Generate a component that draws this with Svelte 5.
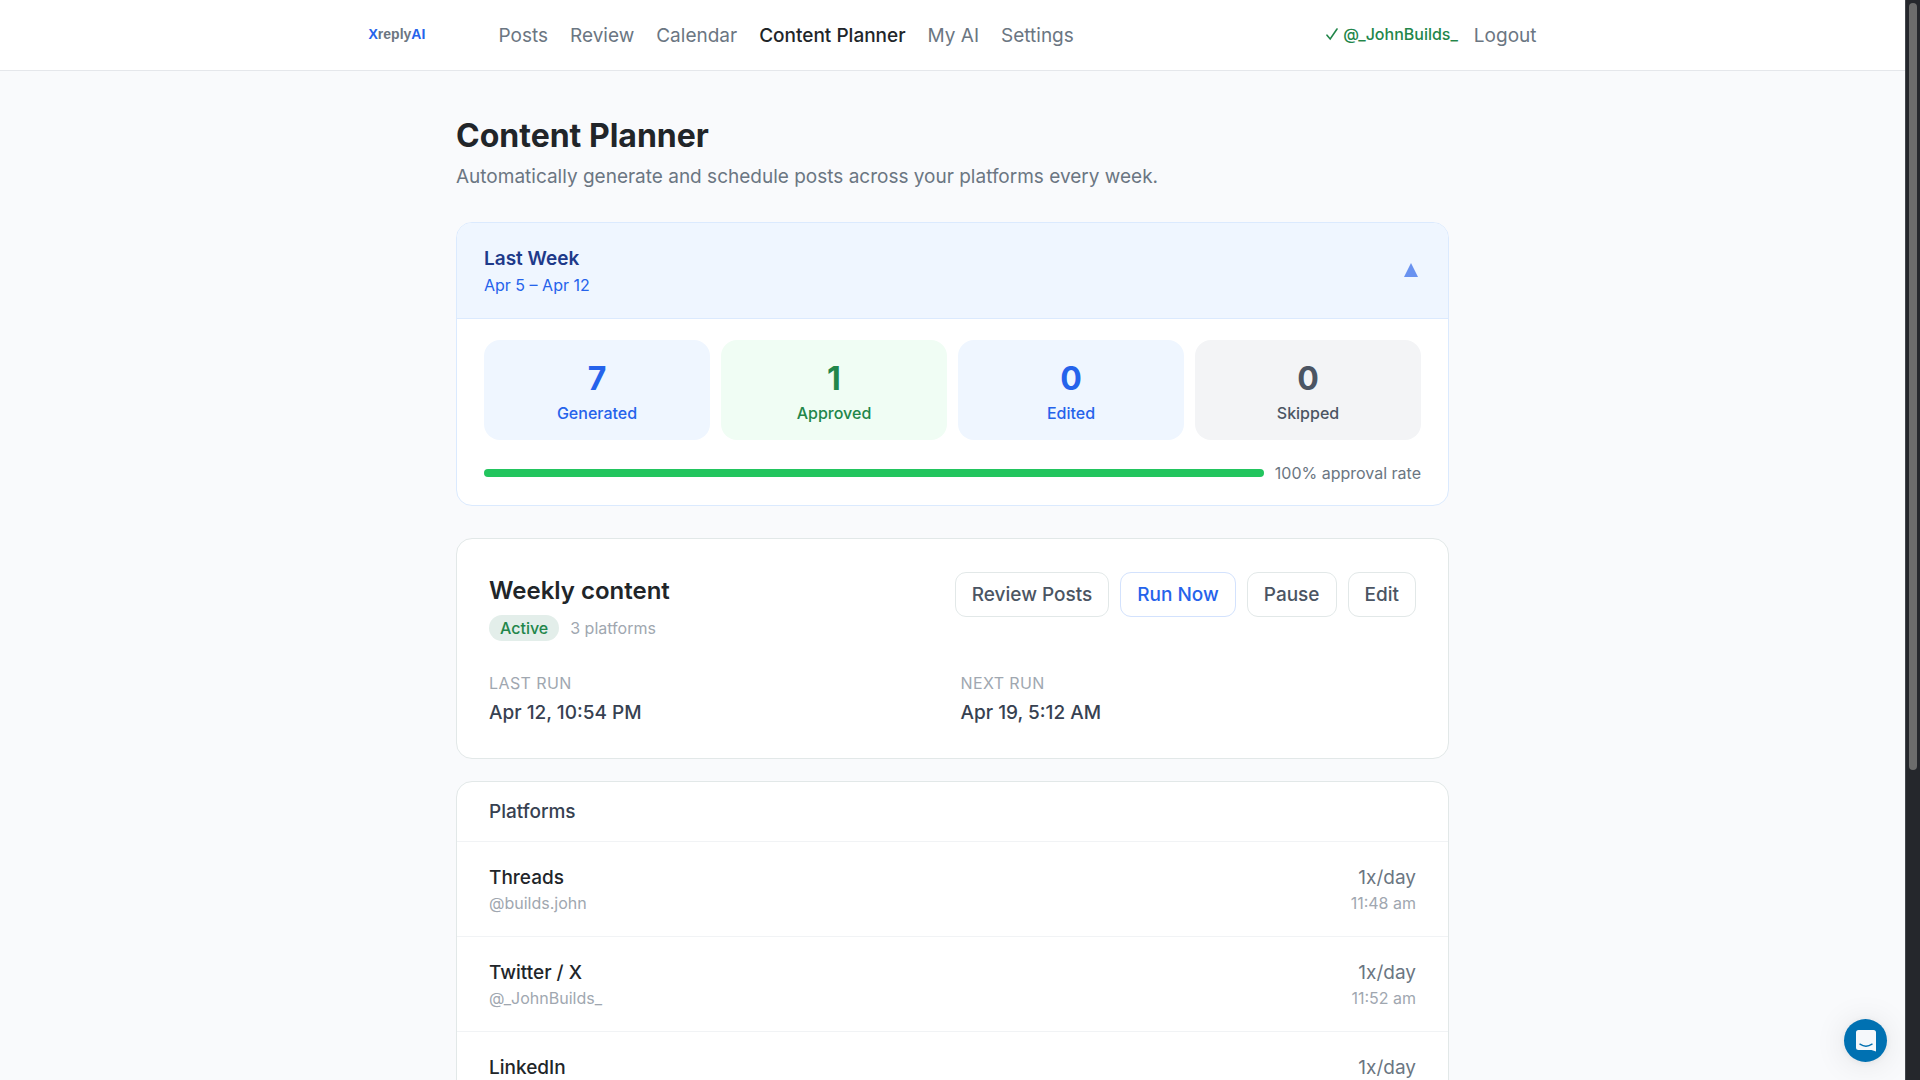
<script>
  const links = ["Posts", "Review", "Calendar", "Content Planner", "My AI", "Settings"];
  const current = "Content Planner";

  const stats = [
    { label: "Generated", value: 7, tone: "blue" },
    { label: "Approved", value: 1, tone: "green" },
    { label: "Edited", value: 0, tone: "blue" },
    { label: "Skipped", value: 0, tone: "gray" },
  ];

  const platforms = [
    { name: "Threads", handle: "@builds.john", rate: "1x/day", time: "11:48 am" },
    { name: "Twitter / X", handle: "@_JohnBuilds_", rate: "1x/day", time: "11:52 am" },
    { name: "LinkedIn", rate: "1x/day" },
  ];

  let approval = $state(100);
  let open = $state(true);
</script>

<div class="app">
  <div class="page">
    <header>
      <div class="bar">
        <a class="logo" href="#home"><b>X</b>reply<b>AI</b></a>
        <nav>
          {#each links as link}
            <a href="#{link}" class:active={link === current}>{link}</a>
          {/each}
        </nav>
        <div class="account">
          <span class="user">
            <svg viewBox="0 0 12 14" width="12" height="14" aria-hidden="true">
              <path d="M1 8.2 4.2 12 11 2" fill="none" stroke="currentColor" stroke-width="1.6" stroke-linecap="round" />
            </svg>
            @_JohnBuilds_
          </span>
          <button type="button" class="logout">Logout</button>
        </div>
      </div>
    </header>

    <main>
      <h1>Content Planner</h1>
      <p class="lead">Automatically generate and schedule posts across your platforms every week.</p>

      <section class="card recap">
        <button type="button" class="recap-head" aria-expanded={open} onclick={() => (open = !open)}>
          <span class="recap-title">
            <strong>Last Week</strong>
            <span class="small">Apr 5 – Apr 12</span>
          </span>
          <svg class="caret" class:closed={!open} viewBox="0 0 14 16" width="14" height="16" aria-hidden="true">
            <path d="M7 0 14 14H0Z" fill="currentColor" />
          </svg>
        </button>

        {#if open}
          <div class="recap-body">
            <div class="stats">
              {#each stats as stat}
                <div class="stat {stat.tone}">
                  <div class="value">{stat.value}</div>
                  <div class="label">{stat.label}</div>
                </div>
              {/each}
            </div>
            <div class="approval">
              <div class="track"><div class="fill" style="width: {approval}%"></div></div>
              <span class="small">{approval}% approval rate</span>
            </div>
          </div>
        {/if}
      </section>

      <section class="card plan">
        <div class="plan-head">
          <div>
            <h2>Weekly content</h2>
            <div class="meta">
              <span class="badge">Active</span>
              <span class="small muted">3 platforms</span>
            </div>
          </div>
          <div class="actions">
            <button type="button">Review Posts</button>
            <button type="button" class="primary">Run Now</button>
            <button type="button">Pause</button>
            <button type="button">Edit</button>
          </div>
        </div>
        <dl>
          <div>
            <dt>Last run</dt>
            <dd>Apr 12, 10:54 PM</dd>
          </div>
          <div>
            <dt>Next run</dt>
            <dd>Apr 19, 5:12 AM</dd>
          </div>
        </dl>
      </section>

      <section class="card platforms">
        <h3>Platforms</h3>
        <ul>
          {#each platforms as p}
            <li>
              <div class="account-info">
                <div class="name">{p.name}</div>
                {#if p.handle}
                  <div class="small muted">{p.handle}</div>
                {/if}
              </div>
              <div class="schedule">
                <div>{p.rate}</div>
                {#if p.time}
                  <div class="small muted">{p.time}</div>
                {/if}
              </div>
            </li>
          {/each}
        </ul>
      </section>
    </main>

    <button type="button" class="chat" aria-label="Open chat">
      <svg viewBox="0 0 20 22" width="20" height="22" aria-hidden="true">
        <path d="M2.500 0H17.500Q20 0 20 2.500V21.500L15.500 20H2.500Q0 20 0 17.500V2.500Q0 0 2.500 0Z" fill="#f5f8fb" />
        <path d="M4 14.200Q10 18.200 16 14.200" fill="none" stroke="#0071b2" stroke-width="1.500" stroke-linecap="round" />
      </svg>
    </button>
  </div>

  <div class="scrollbar"><div class="thumb"></div></div>
</div>

<style>
  :global(body) {
    background: #f9fafc;
  }

  .app {
    display: flex;
    height: 100vh;
    overflow: hidden;
    font-family: Inter, "Liberation Sans", sans-serif;
    font-size: 19px;
    line-height: 27px;
    color: #212529;
  }

  .page {
    position: relative;
    flex: 1;
    min-width: 0;
    overflow: hidden;
  }

  button {
    font: inherit;
    color: inherit;
    cursor: pointer;
  }

  a {
    color: inherit;
    text-decoration: none;
  }

  header {
    background: #fff;
    border-bottom: 1px solid #e5e7eb;
  }

  .bar {
    display: flex;
    align-items: center;
    max-width: 1168px;
    height: 70px;
    margin: 0 auto;
    color: #6b7682;
  }

  .logo {
    font-family: "Liberation Sans", sans-serif;
    font-size: 14px;
    font-weight: 700;
    line-height: 22px;
    width: 130px;
    padding-bottom: 2px;
  }

  .logo b {
    color: #2563eb;
  }

  nav {
    display: flex;
    flex: 1;
    gap: 22px;
  }

  .active {
    color: #212529;
    font-weight: 500;
  }

  .account {
    display: flex;
    align-items: center;
    gap: 16px;
  }

  .user {
    display: flex;
    align-items: center;
    gap: 5px;
    padding-bottom: 2px;
    font-size: 16px;
    font-weight: 500;
    line-height: 22px;
    color: #22864a;
  }

  .logout {
    padding: 0;
    border: none;
    background: none;
  }

  main {
    max-width: 993px;
    margin: 0 auto;
    padding: 44px 0;
  }

  h1,
  h2,
  h3,
  p,
  ul,
  dl,
  dd {
    margin: 0;
  }

  h1 {
    font-size: 32px;
    line-height: 42px;
    font-weight: 700;
  }

  .lead {
    margin: 6px 0 32px;
    color: #6b7682;
  }

  .small {
    font-size: 16px;
    line-height: 22px;
  }

  .muted {
    color: #a0a7b0;
  }

  .card {
    background: #fff;
    border: 1px solid #e2e8e8;
    border-radius: 16px;
    overflow: hidden;
  }

  .recap {
    border-color: #dbeafe;
    margin-bottom: 32px;
  }

  .recap-head {
    display: flex;
    justify-content: space-between;
    align-items: center;
    width: 100%;
    padding: 22px 27px;
    border: none;
    background: #eff6ff;
    color: #2563eb;
    text-align: left;
  }

  .recap-title {
    display: grid;
    gap: 2px;
  }

  .recap-title strong {
    font-weight: 600;
    color: #1e3a8a;
  }

  .caret {
    margin-right: 3px;
    color: #6992f0;
  }

  .closed {
    transform: rotate(180deg);
  }

  .recap-body {
    padding: 21px 27px;
    border-top: 1px solid #dbeafe;
  }

  .stats {
    display: grid;
    grid-template-columns: repeat(4, 1fr);
    gap: 11px;
    margin-bottom: 22px;
  }

  .stat {
    padding: 16px;
    border-radius: 16px;
    text-align: center;
  }

  .value {
    font-size: 32px;
    line-height: 46px;
    font-weight: 700;
  }

  .label {
    font-size: 16px;
    line-height: 22px;
    font-weight: 500;
  }

  .blue {
    background: #eff6ff;
    color: #2563eb;
  }

  .green {
    background: #f0fdf4;
    color: #22864a;
  }

  .gray {
    background: #f3f4f6;
    color: #4b5563;
  }

  .approval {
    display: flex;
    align-items: center;
    gap: 11px;
    color: #6b7682;
  }

  .track {
    flex: 1;
    height: 8px;
    border-radius: 4px;
    background: #f3f4f6;
  }

  .fill {
    height: 100%;
    border-radius: 4px;
    background: #22c55e;
  }

  .plan {
    padding: 33px 32px 32px;
    margin-bottom: 22px;
  }

  .plan-head {
    display: flex;
    justify-content: space-between;
    align-items: flex-start;
    margin-bottom: 31px;
  }

  h2 {
    font-size: 24px;
    line-height: 38px;
    font-weight: 600;
  }

  .meta {
    display: flex;
    align-items: center;
    gap: 11px;
    margin-top: 5px;
  }

  .badge {
    padding: 2px 11px;
    border-radius: 16px;
    background: #e3eeea;
    color: #22864a;
    font-size: 16px;
    line-height: 22px;
    font-weight: 500;
  }

  .actions {
    display: flex;
    gap: 11px;
  }

  .actions button {
    padding: 8px 16px;
    border: 1px solid #e2e8e8;
    border-radius: 11px;
    background: #fff;
    color: #4b5563;
    font-weight: 500;
  }

  .actions .primary {
    border-color: #d3e2fd;
    color: #2563eb;
  }

  dl {
    display: grid;
    grid-template-columns: 1fr 1fr;
    gap: 16px;
  }

  dt {
    margin-bottom: 5px;
    font-size: 16px;
    line-height: 22px;
    letter-spacing: 0.025em;
    text-transform: uppercase;
    color: #a0a7b0;
  }

  dd {
    font-weight: 500;
    color: #374151;
  }

  h3 {
    padding: 16px 32px;
    font-size: 19px;
    font-weight: 500;
    color: #374151;
  }

  ul {
    padding: 0;
    list-style: none;
  }

  li {
    display: flex;
    justify-content: space-between;
    padding: 22px 32px;
    border-top: 1px solid #f1f3f5;
  }

  .name {
    font-weight: 500;
  }

  .account-info,
  .schedule {
    display: grid;
    gap: 1px;
  }

  .schedule {
    text-align: right;
    color: #6b7682;
  }

  .chat {
    position: absolute;
    right: 18px;
    bottom: 18px;
    display: grid;
    place-items: center;
    width: 43px;
    height: 43px;
    padding: 0;
    border: none;
    border-radius: 50%;
    background: #0071b2;
    box-shadow: 0 1px 6px rgba(0, 0, 0, 0.06), 0 2px 32px rgba(0, 0, 0, 0.1);
  }

  .scrollbar {
    width: 15px;
    box-sizing: border-box;
    padding: 3px;
    background: #25272c;
    border-left: 1px solid #43464b;
  }

  .thumb {
    width: 8px;
    height: 71vh;
    margin: 0 auto;
    border-radius: 4px;
    background: #6c6c6c;
  }
</style>
